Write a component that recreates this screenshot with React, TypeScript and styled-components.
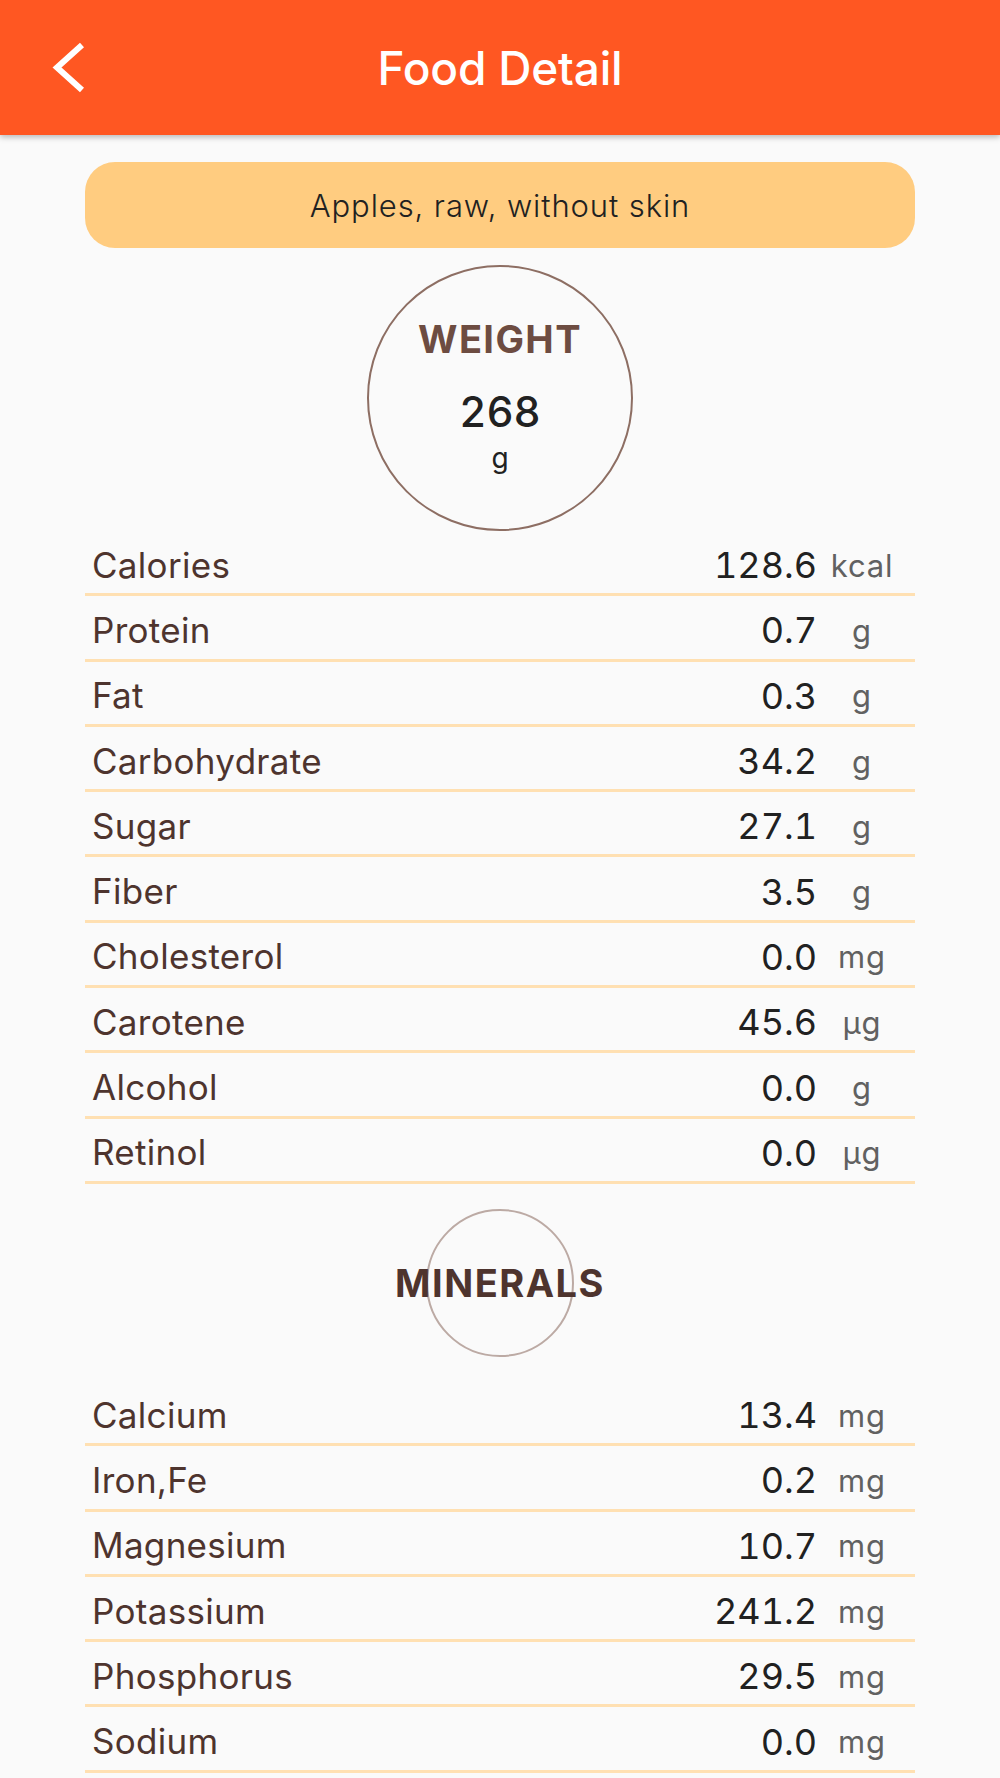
import React from "react";
import styled, { createGlobalStyle } from "styled-components";

const GlobalStyle = createGlobalStyle`
  html, body {
    margin: 0;
    padding: 0;
    background: #fafafa;
  }
  body {
    font-family: Inter, "Noto Sans", "Liberation Sans", sans-serif;
  }
  * { box-sizing: border-box; }
`;

const Page = styled.div`
  width: 1000px;
  min-height: 1778px;
  background: #fafafa;
`;

const AppBar = styled.header`
  height: 135px;
  background: #ff5722;
  box-shadow: 0 2px 6px rgba(0, 0, 0, 0.28);
  display: grid;
  grid-template-columns: 1fr auto 1fr;
  align-items: center;
  position: relative;
  z-index: 1;
`;

const BackButton = styled.button`
  justify-self: start;
  margin-left: 50px;
  padding: 0;
  border: 0;
  background: transparent;
  display: flex;
  align-items: center;
  cursor: pointer;
`;

const Title = styled.h1`
  margin: 0;
  color: #ffffff;
  font-size: 46px;
  font-weight: 500;
  letter-spacing: -0.2px;
  line-height: 1;
`;

const Content = styled.main`
  width: 830px;
  margin: 0 auto;
  display: flex;
  flex-direction: column;
  align-items: center;
`;

const NamePill = styled.div`
  margin-top: 27px;
  width: 100%;
  height: 86px;
  border-radius: 30px;
  background: #ffcc80;
  display: flex;
  align-items: center;
  justify-content: center;
  color: #212121;
  font-size: 31px;
  font-weight: 300;
  letter-spacing: 0.9px;
`;

const WeightCircle = styled.div`
  margin-top: 17px;
  width: 266px;
  height: 266px;
  border-radius: 50%;
  border: 2px solid #8d6e63;
  display: flex;
  flex-direction: column;
  align-items: center;
  padding-top: 53px;
`;

const WeightLabel = styled.div`
  font-size: 38px;
  line-height: 38px;
  font-weight: 700;
  color: #6d4c41;
  letter-spacing: 1.4px;
`;

const WeightValue = styled.div`
  margin-top: 33px;
  font-size: 42px;
  line-height: 42px;
  font-weight: 500;
  color: #212121;
  font-feature-settings: "tnum";
`;

const WeightUnit = styled.div`
  margin-top: 11px;
  font-size: 28px;
  line-height: 28px;
  color: #212121;
`;

const Table = styled.div`
  width: 100%;
  display: flex;
  flex-direction: column;
`;

const Row = styled.div`
  height: 65.3px;
  border-bottom: 3px solid #ffe0b2;
  display: flex;
  align-items: center;
  padding: 6px 16px 0 7px;
`;

const Label = styled.span`
  flex: 1;
  font-size: 35px;
  line-height: 1;
  color: #4e342e;
  letter-spacing: 0.3px;
`;

const Value = styled.span`
  font-size: 36px;
  line-height: 1;
  color: #212121;
  font-feature-settings: "tnum";
  text-align: right;
`;

const Unit = styled.span`
  width: 74px;
  margin-left: 8px;
  text-align: center;
  font-size: 31px;
  line-height: 1;
  color: #616161;
  letter-spacing: 0.8px;
`;

const SectionBadge = styled.div`
  margin: 25px 0 24px;
  width: 148px;
  height: 148px;
  border-radius: 50%;
  border: 2px solid #bcaaa4;
  display: flex;
  align-items: center;
  justify-content: center;
`;

const SectionTitle = styled.span`
  white-space: nowrap;
  font-size: 38px;
  line-height: 1;
  font-weight: 700;
  color: #4e342e;
  letter-spacing: 1.5px;
`;

type Nutrient = { name: string; value: string; unit: string };

const nutrients: Nutrient[] = [
  { name: "Calories", value: "128.6", unit: "kcal" },
  { name: "Protein", value: "0.7", unit: "g" },
  { name: "Fat", value: "0.3", unit: "g" },
  { name: "Carbohydrate", value: "34.2", unit: "g" },
  { name: "Sugar", value: "27.1", unit: "g" },
  { name: "Fiber", value: "3.5", unit: "g" },
  { name: "Cholesterol", value: "0.0", unit: "mg" },
  { name: "Carotene", value: "45.6", unit: "µg" },
  { name: "Alcohol", value: "0.0", unit: "g" },
  { name: "Retinol", value: "0.0", unit: "µg" },
];

const minerals: Nutrient[] = [
  { name: "Calcium", value: "13.4", unit: "mg" },
  { name: "Iron,Fe", value: "0.2", unit: "mg" },
  { name: "Magnesium", value: "10.7", unit: "mg" },
  { name: "Potassium", value: "241.2", unit: "mg" },
  { name: "Phosphorus", value: "29.5", unit: "mg" },
  { name: "Sodium", value: "0.0", unit: "mg" },
];

const NutrientRow = ({ item }: { item: Nutrient }) => (
  <Row>
    <Label>{item.name}</Label>
    <Value>{item.value}</Value>
    <Unit>{item.unit}</Unit>
  </Row>
);

export default function App() {
  return (
    <Page>
      <GlobalStyle />
      <AppBar>
        <BackButton aria-label="Back">
          <svg width="40" height="56" viewBox="0 0 40 56">
            <polyline
              points="32,5 7,27.5 32,50"
              fill="none"
              stroke="#ffffff"
              strokeWidth="6"
              strokeLinecap="butt"
              strokeLinejoin="miter"
            />
          </svg>
        </BackButton>
        <Title>Food Detail</Title>
        <div />
      </AppBar>
      <Content>
        <NamePill>Apples, raw, without skin</NamePill>
        <WeightCircle>
          <WeightLabel>WEIGHT</WeightLabel>
          <WeightValue>268</WeightValue>
          <WeightUnit>g</WeightUnit>
        </WeightCircle>
        <Table>
          {nutrients.map((n) => (
            <NutrientRow key={n.name} item={n} />
          ))}
        </Table>
        <SectionBadge>
          <SectionTitle>MINERALS</SectionTitle>
        </SectionBadge>
        <Table>
          {minerals.map((n) => (
            <NutrientRow key={n.name} item={n} />
          ))}
        </Table>
      </Content>
    </Page>
  );
}
